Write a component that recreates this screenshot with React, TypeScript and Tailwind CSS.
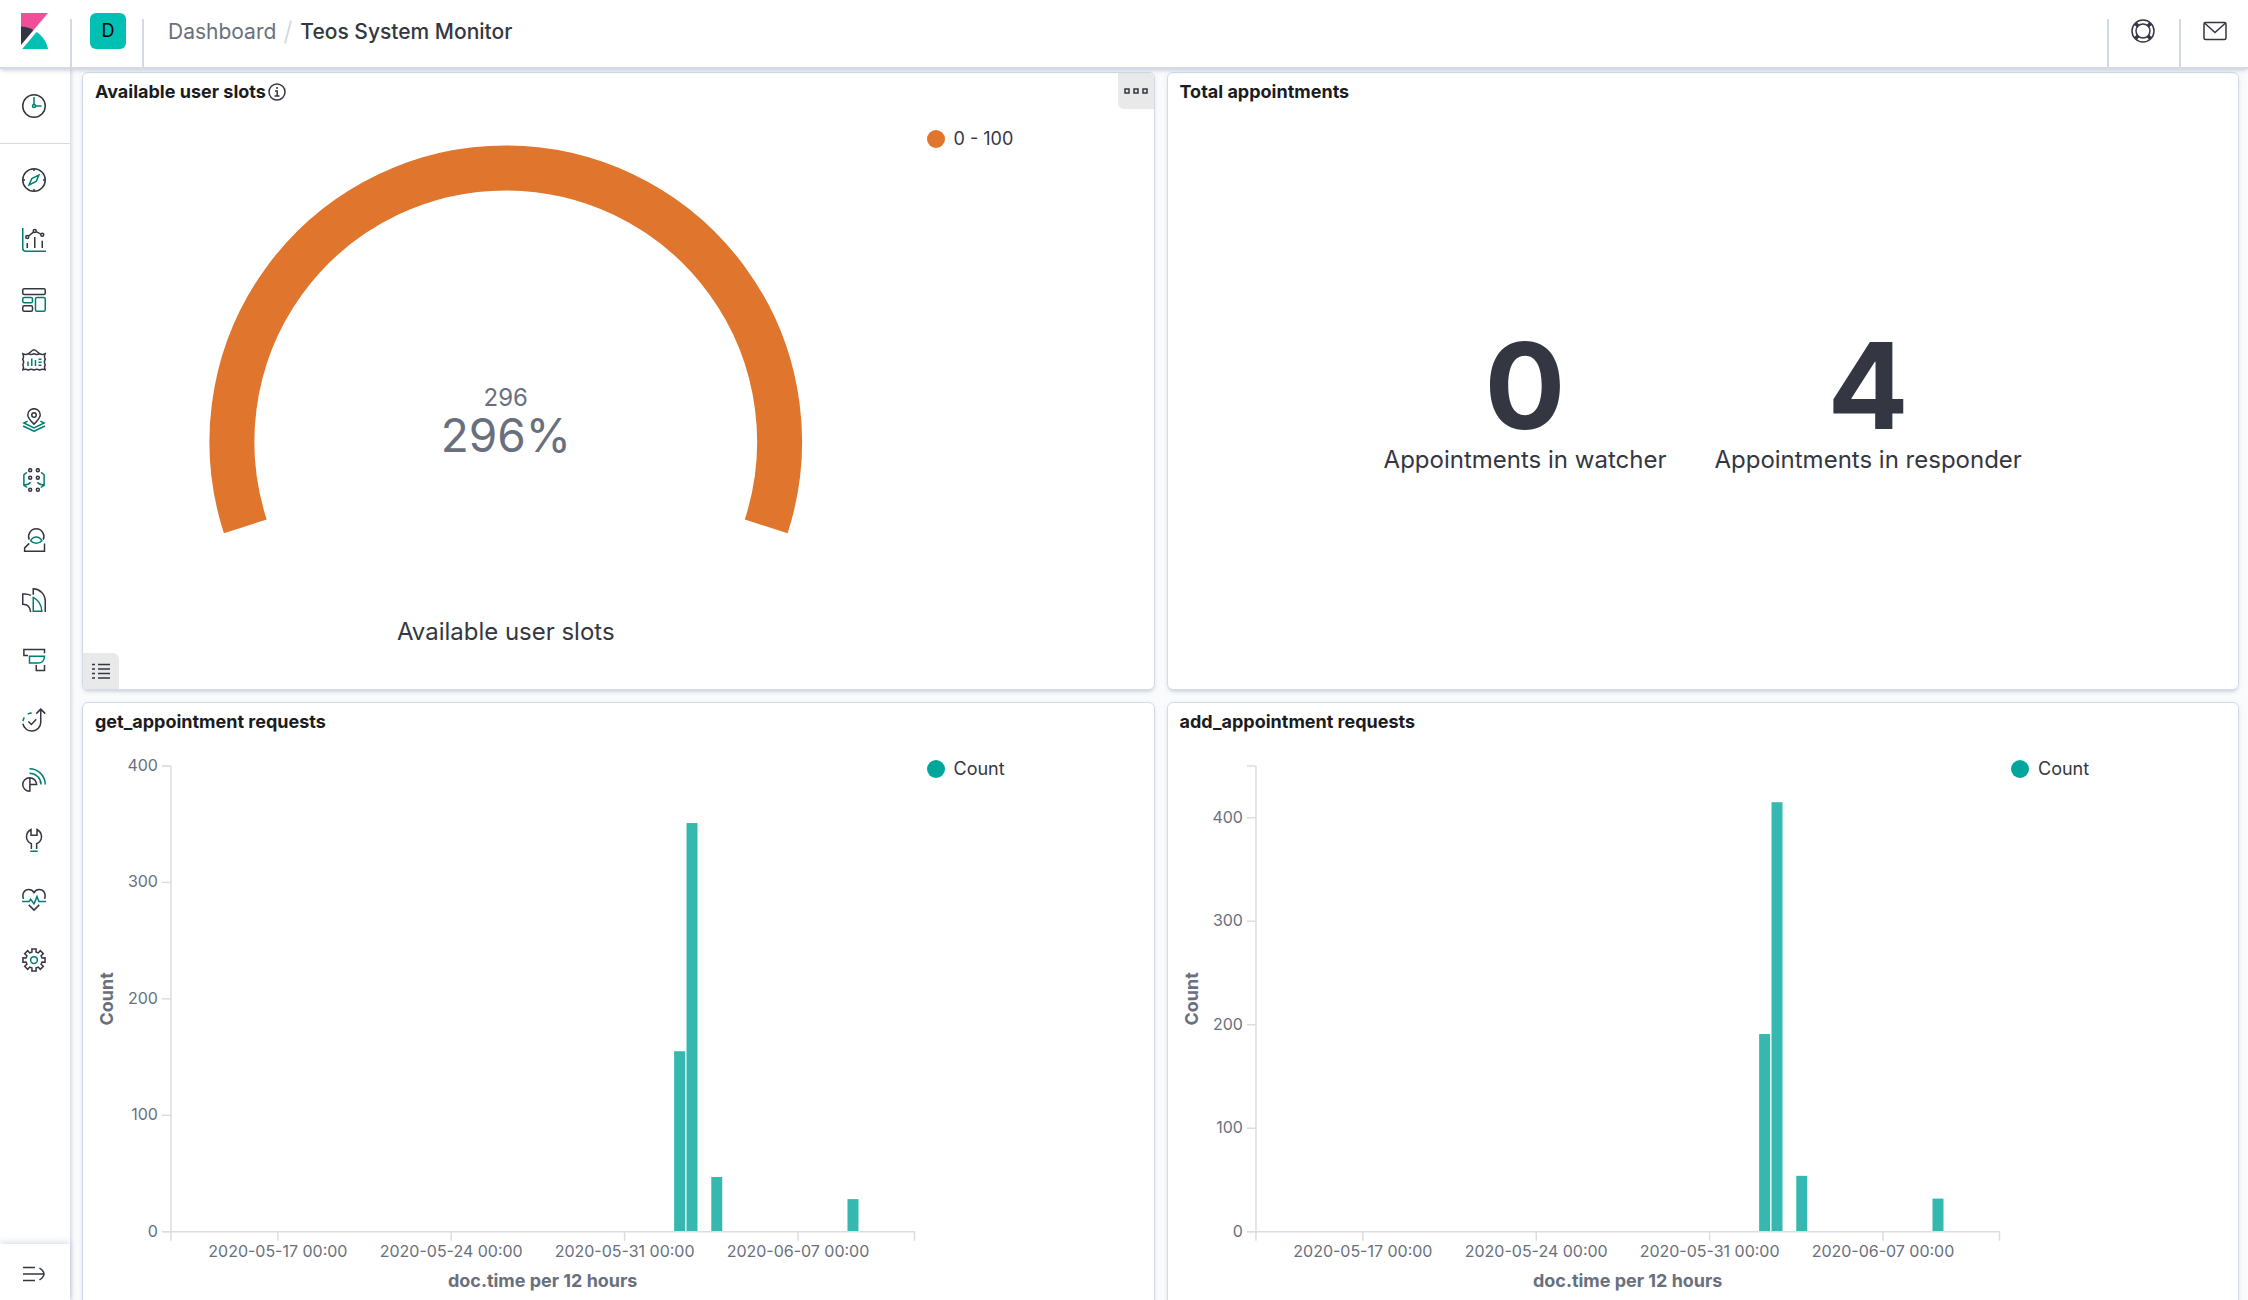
import { ReactNode } from "react";

const ACCENT = "#017d73";

const Icon = ({ children, size = 24, box = 32, stroke = 2 }: { children: ReactNode; size?: number; box?: number; stroke?: number }) => (
  <svg
    width={size}
    height={size}
    viewBox={`0 0 ${box} ${box}`}
    fill="none"
    stroke="#343741"
    strokeWidth={stroke}
    aria-hidden="true"
  >
    {children}
  </svg>
);

// Eight teeth, four corner points for each one
const gearPoints = Array.from({ length: 8 })
  .flatMap((_, i) =>
    [
      [-14, 11],
      [-11, 15],
      [11, 15],
      [14, 11],
    ].map(([deg, r]) => {
      const a = ((i * 45 + deg) * Math.PI) / 180;
      return `${16 + r * Math.sin(a)},${16 - r * Math.cos(a)}`;
    })
  )
  .join(" ");

const navItems = [
  {
    label: "Discover",
    icon: (
      <>
        <circle cx="16" cy="16" r="15" />
        <path d="M16 1v3M16 28v3M1 16h3M28 16h3" />
        <path stroke={ACCENT} d="M9.5 22.5l3.6-8.4 9.4-4.6-3.6 8.4z" />
      </>
    ),
  },
  {
    label: "Visualize",
    icon: (
      <>
        <path stroke={ACCENT} d="M1 0v27a4 4 0 0 0 4 4h27" />
        <path d="M7 20v6.500M17 12v14.500M27 17v9.500M8.700 10.700l6.600-5.300M18.800 4.900l6.300 3.200" />
        <circle cx="7" cy="12" r="2" />
        <circle cx="17" cy="4" r="2" />
        <circle cx="27" cy="9" r="2" />
      </>
    ),
  },
  {
    label: "Dashboard",
    icon: (
      <>
        <rect x="1" y="1" width="30" height="7.500" rx="2" />
        <rect x="1" y="23.500" width="13" height="7.500" rx="2" />
        <rect x="1" y="12.500" width="13" height="7" rx="2" stroke={ACCENT} />
        <rect x="18" y="12.500" width="13" height="18.500" rx="2" stroke={ACCENT} />
      </>
    ),
  },
  {
    label: "Canvas",
    icon: (
      <>
        <path d="M8 8l6.200-5a3 3 0 0 1 3.600 0L24 8" />
        <path d="M1 7.500c3 1.500 5 1.500 7.500 0 2.500 1.500 5 1.500 7.500 0 2.500 1.500 5 1.500 7.500 0 2.500 1.500 4.500 1.500 7.500 0-1.500 3-1.500 5 0 7.500-1.500 2.500-1.500 5 0 7.500-1.500 2.500-1.500 4 0 6.500-3-1-5-1-7.500.5-2.500-1.500-5-1.500-7.500 0-2.500-1.500-5-1.500-7.500 0-2.500-1.500-4.500-1.500-7.500-.5 1.500-2.500 1.500-4 0-6.500 1.500-2.500 1.500-5 0-7.500 1.500-2.500 1.500-4.500 0-7.500z" />
        <path stroke={ACCENT} d="M8 18v6M13 14v10M18 16v8M22 15h4M22 19h4M22 23h4" />
      </>
    ),
  },
  {
    label: "Maps",
    icon: (
      <>
        <path d="M16 21.500C11 16.500 7.700 13 7.700 9.200a8.300 8.300 0 0 1 16.600 0c0 3.800-3.300 7.300-8.300 12.300z" />
        <circle cx="16" cy="9.300" r="3" />
        <path stroke={ACCENT} d="M7.500 17.500L2.500 20 16 26.500 29.500 20l-5-2.500M1.500 24L16 31l14.500-7" />
      </>
    ),
  },
  {
    label: "Machine Learning",
    icon: (
      <>
        {[2.9, 12.9, 28.9].map((cy) => (
          <g key={cy}>
            <circle cx="10.900" cy={cy} r="2" />
            <circle cx="21.100" cy={cy} r="2" />
          </g>
        ))}
        <path stroke={ACCENT} d="M6.500 5.800L2.500 9v14l4.500 3M2.500 23c4-.5 7-1.500 9-4M25.500 5.800l4 3.200v14L25 26M29.500 23c-4-.5-7-1.500-9-4" />
      </>
    ),
  },
  {
    label: "Metrics",
    icon: (
      <>
        <path d="M9.700 15.500a10.200 10.200 0 1 1 18.600 0M9.700 20.500L3.500 26.500V31H30V20.500" />
        <path stroke={ACCENT} d="M11.500 17c4-6.500 11-6.500 15 0-4 4.500-11 4.500-15 0z" />
      </>
    ),
  },
  {
    label: "Logs",
    icon: (
      <>
        <path d="M12 9.800A20 20 0 0 0 1 8v13.500c6 0 10 4 10.500 10.500M15 9V1c9 .5 16 7 16 16.500V32" />
        <path stroke={ACCENT} d="M15 12.500c7 3.500 11 10 11.500 18.500H15z" />
      </>
    ),
  },
  {
    label: "APM",
    icon: (
      <>
        <path d="M8 10H2.500V2H30v5M19 22.500V30h11v-7.500" />
        <path stroke={ACCENT} d="M10 11h20c0 5.500-3.500 9-8.500 9H10z" />
      </>
    ),
  },
  {
    label: "Uptime",
    icon: (
      <>
        <path d="M1.200 21A12 12 0 0 0 25 19V2M19 7.500l6-6 6 6M8.500 18l4 4 6.500-7" />
        <path stroke={ACCENT} d="M1.300 17.500a12 12 0 0 1 1.800-5M7.500 8.200a12 12 0 0 1 5.500-1.400" />
      </>
    ),
  },
  {
    label: "SIEM",
    icon: (
      <>
        <path d="M10 31a9 9 0 0 1 0-18 9.300 9.300 0 0 1 9.500 9H10M10.500 13v18.500" />
        <path stroke={ACCENT} d="M10 1a21 21 0 0 1 21 21M10 7a15.500 15.500 0 0 1 15.500 15" />
      </>
    ),
  },
  {
    label: "Dev Tools",
    icon: (
      <>
        <path d="M12.500 28v-7C8.500 19 6 15.500 6 11.500c0-4 2.500-7.500 6-9.500v7.500h8V2c3.500 2 6 5.500 6 9.500 0 4-2.500 7.500-6.500 9.500v7" />
        <path stroke={ACCENT} d="M11 31h10" />
      </>
    ),
  },
  {
    label: "Stack Monitoring",
    icon: (
      <>
        <path d="M2 14.500C-.5 8 3 2 9 2c3 0 5.500 1.500 7 4 1.500-2.500 4-4 7-4 6 0 9.500 6 7 12.500M9 22.500l7 7 7-7" />
        <path stroke={ACCENT} d="M0 18h9.500l2-3 4.500 6 4-9.500 2.500 6.500H32" />
      </>
    ),
  },
  {
    label: "Management",
    icon: (
      <>
        <polygon points={gearPoints} />
        <circle cx="16" cy="16" r="4.500" stroke={ACCENT} />
      </>
    ),
  },
];

const NavButton = ({ label, children }: { label: string; children: ReactNode }) => (
  <button type="button" aria-label={label} className="flex h-15 w-full items-center justify-center pr-0.5">
    <Icon>{children}</Icon>
  </button>
);

const Divider = () => <div className="h-12 w-0.5 self-end bg-[#d3dae6]" />;

const Header = () => (
  <header className="relative z-20 flex h-[69px] shrink-0 border-b-2 border-[#d3dae6] bg-white shadow-[0_3px_3px_-1px_rgba(152,162,179,0.3),0_1px_7px_-2px_rgba(152,162,179,0.3)]">
    <a href="#home" aria-label="Kibana home" className="flex h-[62px] w-[70px] items-center justify-center pr-0.5">
      <svg width="27" height="36" viewBox="0 0 27 36" aria-hidden="true">
        <path fill="#f04e98" d="M0 0h27L0 32z" />
        <path fill="#343741" d="M0 13.500c4.600 0 8.800 1.300 12.400 3.600L0 31.800z" />
        <path fill="#00bfb3" d="M15.600 19C21.400 22.800 25.700 28.900 27 36H1.200z" />
      </svg>
    </a>
    <Divider />
    <div className="flex h-[62px] w-[70px] items-center justify-center pl-0.5">
      <button type="button" aria-label="Default space" className="h-9 w-9 rounded-md bg-[#00bfb3] text-lg text-black">
        D
      </button>
    </div>
    <Divider />
    <nav aria-label="Breadcrumbs" className="flex h-16 flex-1 items-center pl-6 text-[21px]">
      <a href="#dashboards" className="text-[#69707d]">
        Dashboard
      </a>
      <span className="mx-[11px] h-6 w-0.5 rotate-15 bg-[#d3dae6]" />
      <span className="font-medium text-[#343741]">Teos System Monitor</span>
    </nav>
    <Divider />
    <button type="button" aria-label="Help" className="flex h-[62px] w-[70px] items-center justify-center pr-0.5">
      <Icon box={24} stroke={1.5}>
        <circle cx="12" cy="12" r="11" />
        <circle cx="12" cy="12" r="7" />
        <path strokeWidth="3.500" d="M4.500 4.500l2.500 2.500M19.500 4.500L17 7M4.500 19.500L7 17M19.500 19.500L17 17" />
      </Icon>
    </button>
    <Divider />
    <button type="button" aria-label="News" className="flex h-[62px] w-[67px] items-center justify-center">
      <Icon box={24} stroke={1.5}>
        <rect x="1" y="3.500" width="22" height="17" rx="1.500" />
        <path d="M1.500 4L12 13.500 22.500 4" />
      </Icon>
    </button>
  </header>
);

const Sidebar = () => (
  <aside className="relative z-10 flex w-[70px] shrink-0 flex-col bg-white shadow-[2px_0_3px_rgba(152,162,179,0.35)]">
    <div className="border-b border-[#d3dae6] py-[7px]">
      <NavButton label="Recently viewed">
        <circle cx="16" cy="16" r="15" />
        <g stroke={ACCENT}>
          <circle cx="16" cy="16" r="2" />
          <path d="M16 4v10M18 16h8" />
        </g>
      </NavButton>
    </div>
    <nav aria-label="Applications" className="flex-1 overflow-hidden pt-1.5">
      {navItems.map((item) => (
        <NavButton key={item.label} label={item.label}>
          {item.icon}
        </NavButton>
      ))}
    </nav>
    <button
      type="button"
      aria-label="Expand navigation"
      className="flex h-14 shrink-0 items-center justify-center pt-1 pr-0.5 shadow-[0_-2px_6px_rgba(152,162,179,0.35)]"
    >
      <Icon box={24} stroke={1.5}>
        <path d="M1 5.500h12M1 12h21M1 18.500h12M17.500 6l2.500 2q2 2 2 4t-2 4l-2.500 2" />
      </Icon>
    </button>
  </aside>
);

const Panel = ({ title, titleIcon, actions, children }: { title: string; titleIcon?: ReactNode; actions?: ReactNode; children: ReactNode }) => (
  <section className="relative flex min-w-0 flex-col rounded-md border border-[#d3dae6] bg-white shadow-[0_3px_3px_-1px_rgba(152,162,179,0.3),0_1px_7px_-2px_rgba(152,162,179,0.3)]">
    <div className="flex h-9 items-center gap-0.5 pt-0.5 pl-3">
      <h2 className="text-lg leading-6 font-bold text-[#1a1c21]">{title}</h2>
      {titleIcon}
    </div>
    {actions}
    {children}
  </section>
);

const Legend = ({ label, dot }: { label: string; dot: string }) => (
  <div className="w-[227px] shrink-0 pt-[18px]">
    <button type="button" className="flex items-center gap-[9px] text-lg leading-6 text-[#343741]">
      <span className={`size-[18px] rounded-full ${dot}`} />
      {label}
    </button>
  </div>
);

const Gauge = () => {
  const r = 274;
  const dx = r * Math.cos(Math.PI / 10);
  const y = 333 + r * Math.sin(Math.PI / 10);
  return (
    <svg viewBox="0 0 844 580" className="h-auto min-w-0 flex-1" role="img" aria-label="Available user slots gauge">
      <path d={`M${423 - dx} ${y}A${r} ${r} 0 1 1 ${423 + dx} ${y}`} fill="none" stroke="#e0752d" strokeWidth="45" />
      <g textAnchor="middle">
        <text x="423" y="297" className="fill-[#69707d] text-2xl">
          296
        </text>
        <text x="423" y="343" className="fill-[#69707d] text-[46px]">
          296%
        </text>
        <text x="423" y="531" className="fill-[#343741] text-2xl">
          Available user slots
        </text>
      </g>
    </svg>
  );
};

type Bar = { slot: number; count: number };

const LEFT = 88;
const RIGHT = 832;
const TOP = 27;
const BOTTOM = 493;
const SLOT = 12.39; // width of one 12 hour bucket
const FIRST_TICK = 195;
const dates = ["2020-05-17 00:00", "2020-05-24 00:00", "2020-05-31 00:00", "2020-06-07 00:00"];

const BarChart = ({ bars, max }: { bars: Bar[]; max: number }) => {
  const y = (v: number) => BOTTOM - (v / max) * (BOTTOM - TOP);
  const xTicks = dates.map((_, i) => FIRST_TICK + i * 14 * SLOT);
  const yTicks = [0, 100, 200, 300, 400];
  return (
    <svg viewBox="0 0 844 580" className="h-auto min-w-0 flex-1" role="img" aria-label="Count per 12 hours">
      {bars.map((b) => (
        <rect key={b.slot} x={FIRST_TICK + b.slot * SLOT} y={y(b.count)} width="11" height={BOTTOM - y(b.count)} fill="#34b8b0" />
      ))}
      <g stroke="#ddd" strokeWidth="1.500">
        <path d={`M${LEFT} ${TOP}V${BOTTOM + 9}M${LEFT - 9} ${BOTTOM}H${RIGHT}v9M${LEFT - 9} ${TOP}h9`} fill="none" />
        {xTicks.map((x) => (
          <line key={x} x1={x} x2={x} y1={BOTTOM} y2={BOTTOM + 9} />
        ))}
        {yTicks.map((v) => (
          <line key={v} x1={LEFT - 9} x2={LEFT} y1={y(v)} y2={y(v)} />
        ))}
      </g>
      <g className="fill-[#69707d] text-[16px]">
        {yTicks.map((v) => (
          <text key={v} x="75" y={y(v) + 5} textAnchor="end">
            {v}
          </text>
        ))}
        {xTicks.map((x, i) => (
          <text key={x} x={x} y="518" textAnchor="middle">
            {dates[i]}
          </text>
        ))}
      </g>
      <g className="fill-[#69707d] text-lg font-bold" textAnchor="middle">
        <text x="460" y="548">
          doc.time per 12 hours
        </text>
        <text transform="translate(30 260) rotate(-90)">Count</text>
      </g>
    </svg>
  );
};

const Metric = ({ value, label }: { value: number; label: string }) => (
  <div className="text-center text-[#343741]">
    <div className="text-[120px] leading-[120px] font-bold">{value}</div>
    <div className="text-2xl leading-7">{label}</div>
  </div>
);

export default function App() {
  return (
    <div className="flex h-screen flex-col bg-[#fafbfd] font-['Inter',sans-serif]">
      <Header />
      <div className="flex min-h-0 flex-1">
        <Sidebar />
        <main className="grid min-w-0 flex-1 grid-cols-2 content-start gap-3 overflow-y-auto pt-[3px] pr-[9px] pb-3 pl-3 [scrollbar-width:none]">
          <Panel
            title="Available user slots"
            titleIcon={
              <Icon size={18} box={18} stroke={1.5}>
                <circle cx="9" cy="9" r="8" />
                <path d="M7 8h2.200v5M6.500 13h5" />
                <circle cx="9" cy="5" r="1" fill="#343741" stroke="none" />
              </Icon>
            }
            actions={
              <>
                <button
                  type="button"
                  aria-label="Panel options"
                  className="absolute top-0 right-0 flex size-9 items-center justify-center rounded-tr-md rounded-bl-md bg-[#e9e9e9]"
                >
                  <Icon box={24} stroke={1.5}>
                    <path d="M1 10h4v4H1zM10 10h4v4h-4zM19 10h4v4h-4z" />
                  </Icon>
                </button>
                <button
                  type="button"
                  aria-label="Toggle legend"
                  className="absolute bottom-0 left-0 flex size-9 items-center justify-center rounded-tr-md rounded-bl-md bg-[#e9e9e9]"
                >
                  <Icon size={18} box={18} stroke={1.5}>
                    <path d="M0 2.500h3M6 2.500h12M0 7h3M6 7h12M0 11.500h3M6 11.500h12M0 16h3M6 16h12" />
                  </Icon>
                </button>
              </>
            }
          >
            <div className="flex items-start">
              <Gauge />
              <Legend label="0 - 100" dot="bg-[#e0752d]" />
            </div>
          </Panel>
          <Panel title="Total appointments">
            <div className="flex flex-1 items-center justify-center gap-12 pt-0.5">
              <Metric value={0} label="Appointments in watcher" />
              <Metric value={4} label="Appointments in responder" />
            </div>
          </Panel>
          <Panel title="get_appointment requests">
            <div className="flex items-start">
              <BarChart
                max={400}
                bars={[
                  { slot: 32, count: 155 },
                  { slot: 33, count: 351 },
                  { slot: 35, count: 47 },
                  { slot: 46, count: 28 },
                ]}
              />
              <Legend label="Count" dot="bg-[#00a69b]" />
            </div>
          </Panel>
          <Panel title="add_appointment requests">
            <div className="flex items-start">
              <BarChart
                max={450}
                bars={[
                  { slot: 32, count: 191 },
                  { slot: 33, count: 415 },
                  { slot: 35, count: 54 },
                  { slot: 46, count: 32 },
                ]}
              />
              <Legend label="Count" dot="bg-[#00a69b]" />
            </div>
          </Panel>
        </main>
      </div>
    </div>
  );
}
